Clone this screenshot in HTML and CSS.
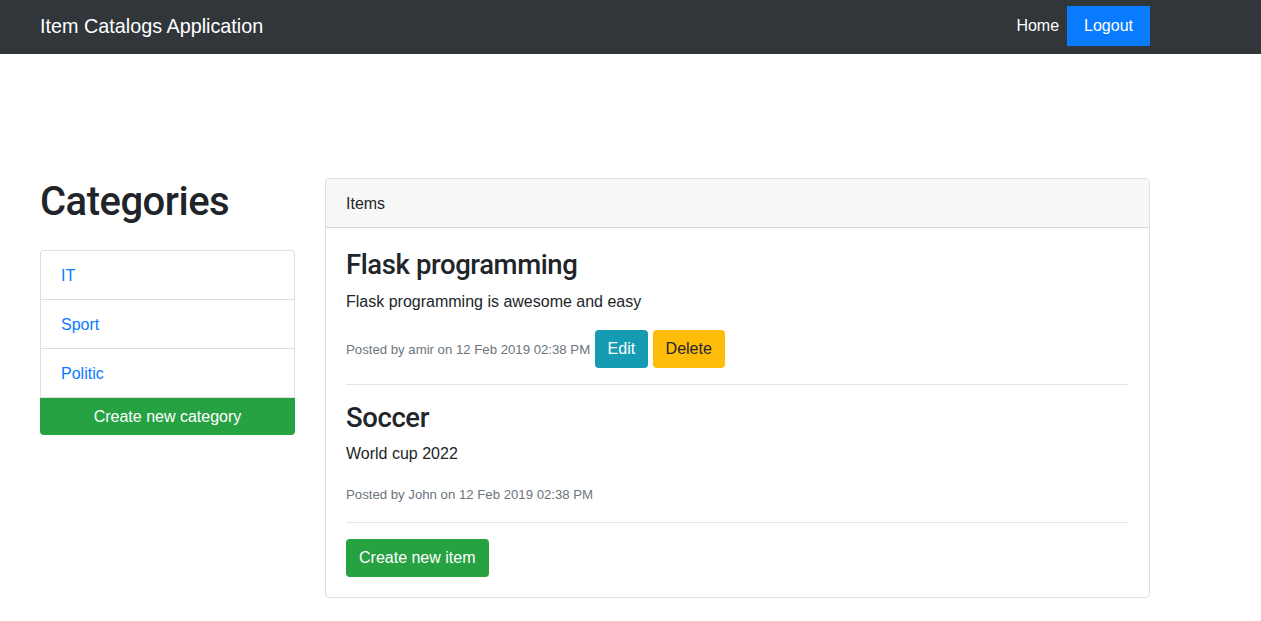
FILE: index.html
```html
<!DOCTYPE html>
<html lang="en">
<head>
<meta charset="utf-8">
<title>Item Catalogs Application</title>
<link rel="stylesheet" href="styles.css">
</head>
<body>
<nav class="navbar">
  <div class="container navbar-inner">
    <a class="brand" href="#">Item Catalogs Application</a>
    <div class="nav">
      <a class="nav-link" href="#">Home</a>
      <a class="nav-link logout" href="#">Logout</a>
    </div>
  </div>
</nav>
<main class="container main">
  <div class="row">
    <aside class="col-side">
      <h1 class="side-title">Categories</h1>
      <div class="list-group">
        <a class="list-item" href="#">IT</a>
        <a class="list-item" href="#">Sport</a>
        <a class="list-item" href="#">Politic</a>
      </div>
      <a class="btn btn-success btn-block" href="#">Create new category</a>
    </aside>
    <section class="col-main">
      <div class="card">
        <div class="card-header">Items</div>
        <div class="card-body">
          <div class="item">
            <h3 class="item-title">Flask programming</h3>
            <p class="item-desc">Flask programming is awesome and easy</p>
            <div class="meta"><small class="muted">Posted by amir on 12 Feb 2019 02:38 PM</small> <a class="btn btn-info" href="#">Edit</a> <a class="btn btn-warning" href="#">Delete</a></div>
          </div>
          <hr class="sep">
          <div class="item">
            <h3 class="item-title">Soccer</h3>
            <p class="item-desc">World cup 2022</p>
            <div class="meta"><small class="muted">Posted by John on 12 Feb 2019 02:38 PM</small></div>
          </div>
          <hr class="sep">
          <a class="btn btn-success" href="#">Create new item</a>
        </div>
      </div>
    </section>
  </div>
</main>
</body>
</html>
```
FILE: styles.css
```css
* { box-sizing: border-box; }
html, body { margin: 0; padding: 0; }
body {
  font-family: "Liberation Sans", Helvetica, Arial, sans-serif;
  font-size: 16px;
  line-height: 1.5;
  color: #212529;
  background: #fff;
}
a { text-decoration: none; }

.container {
  width: 1140px;
  padding: 0 15px;
  margin-left: 25px;
}

.navbar { background: #31363b; }
.navbar-inner {
  display: flex;
  justify-content: space-between;
  align-items: center;
  padding-top: 6px;
  padding-bottom: 8px;
}
.brand {
  color: #fff;
  font-size: 19.8px;
  line-height: 30px;
  padding: 5px 0;
}
.nav { display: flex; align-items: center; }
.nav-link {
  color: #fff;
  padding: 8px 8px;
  line-height: 24px;
}
.nav-link.logout {
  background: #087bff;
  padding: 8px 17px;
}

.main { padding-top: 124px; }
.row { display: flex; gap: 30px; align-items: flex-start; }
.col-side { width: 255px; flex: none; }
.col-main { width: 825px; flex: none; }

.side-title {
  font-family: Roboto, "Liberation Sans", Arial, sans-serif;
  font-size: 40px;
  letter-spacing: -0.5px;
  font-weight: 500;
  line-height: 48px;
  margin: 0 0 24px;
}
.list-group {
  border: 1px solid rgba(0,0,0,.125);
  border-bottom: 0;
  border-radius: 4px 4px 0 0;
}
.list-item {
  display: block;
  padding: 13px 20px 11px;
  color: #087bff;
  border-bottom: 1px solid rgba(0,0,0,.125);
}

.btn {
  display: inline-block;
  padding: 6px 12px;
  border: 1px solid transparent;
  border-radius: 4px;
  font-size: 16px;
  line-height: 24px;
  text-align: center;
  vertical-align: baseline;
}
.btn-success { background: #27a243; color: #fff; }
.btn-info { background: #169cb2; color: #fff; }
.btn-warning { background: #ffbd0a; color: #212529; }
.btn-block {
  display: block;
  width: 100%;
  border-radius: 0 0 4px 4px;
  padding: 6px 12px 5px;
}

.card {
  border: 1px solid rgba(0,0,0,.125);
  border-radius: 4px;
}
.card-header {
  padding: 13px 20px 11px;
  background: #f7f7f7;
  border-bottom: 1px solid rgba(0,0,0,.125);
  border-radius: 3px 3px 0 0;
}
.card-body { padding: 20px; }

.item-title {
  font-family: Roboto, "Liberation Sans", Arial, sans-serif;
  font-size: 27.5px;
  letter-spacing: -0.4px;
  font-weight: 500;
  line-height: 33.6px;
  margin: 0 0 8px;
}
.item-desc { margin: 0 0 16px; }
.meta { line-height: 24px; }
.muted { font-size: 13.2px; line-height: 1; color: #6c757d; }

.sep {
  border: 0;
  border-top: 1px solid rgba(0,0,0,.1);
  margin: 16px 0;
}
```
